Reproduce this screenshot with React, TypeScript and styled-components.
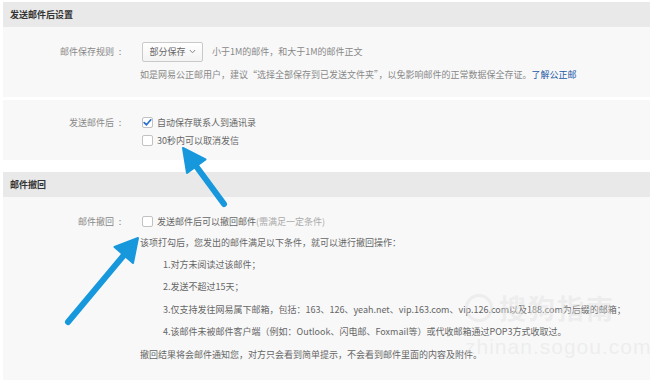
import React from "react";
import styled, { createGlobalStyle } from "styled-components";

const Global = createGlobalStyle`
  html, body { margin: 0; padding: 0; background: #ffffff; }
  body { font-family: "Noto Sans CJK SC", "Noto Sans", sans-serif; font-size: 9px; color: #666; }
`;

const Page = styled.div`
  position: relative;
  width: 650px;
  height: 385px;
  overflow: hidden;
  padding: 2px 0 0 3px;
  box-sizing: border-box;
`;

const SectionHeader = styled.div`
  height: 25px;
  background: #e9e9e9;
  display: flex;
  align-items: center;
  padding-left: 7px;
  font-weight: 700;
  font-size: 9px;
  color: #333;
`;

const Panel = styled.div<{ $h: number; $gapAfter?: number; $pt: number }>`
  background: #f8f8f8;
  height: ${(p) => p.$h}px;
  box-sizing: border-box;
  padding-top: ${(p) => p.$pt}px;
  margin-bottom: ${(p) => p.$gapAfter ?? 0}px;
  display: flex;
  flex-direction: column;
`;

const Row = styled.div<{ $h: number }>`
  display: grid;
  grid-template-columns: 123px 1fr;
  column-gap: 14px;
  align-items: center;
  height: ${(p) => p.$h}px;
`;

const Label = styled.div`
  display: flex;
  justify-content: flex-end;
  color: #888;
  white-space: nowrap;
`;

const Colon = styled.span`
  display: inline-block;
  width: 12px;
  text-align: center;
`;

const Content = styled.div<{ $indent?: number }>`
  display: flex;
  align-items: center;
  gap: 4px;
  white-space: nowrap;
  padding-left: ${(p) => p.$indent ?? 0}px;
`;

const Select = styled.div`
  margin-left: 2px;
  width: 61px;
  height: 20px;
  box-sizing: border-box;
  border: 1px solid #c9c9c9;
  border-radius: 2px;
  background: linear-gradient(#ffffff, #f3f3f3);
  display: flex;
  align-items: center;
  justify-content: center;
  gap: 3px;
  color: #666;
  margin-right: 5px;
`;

const Hint = styled.span<{ $c?: string }>`
  color: ${(p) => p.$c ?? "#888"};
`;

const Link = styled.a`
  color: #2558a6;
  text-decoration: none;
`;

const Box = styled.span`
  width: 11px;
  height: 11px;
  box-sizing: border-box;
  border: 1px solid #c2c2c2;
  border-radius: 2px;
  background: #fff;
  display: inline-flex;
  align-items: center;
  justify-content: center;
  margin-left: 2px;
`;

const Overlay = styled.svg`
  position: absolute;
  left: 0;
  top: 0;
  pointer-events: none;
`;

const Watermark = styled.div`
  position: absolute;
  left: 465px;
  top: 288px;
  display: flex;
  flex-direction: column;
  align-items: flex-start;
  color: rgba(225, 225, 225, 0.45);
  pointer-events: none;
`;

const WmTop = styled.div`
  display: flex;
  align-items: center;
  gap: 6px;
  font-size: 27px;
  font-weight: 700;
  letter-spacing: 2px;
`;

const WmCircle = styled.span`
  width: 28px;
  height: 28px;
  border: 3px solid rgba(225, 225, 225, 0.45);
  border-radius: 50%;
  box-sizing: border-box;
`;

const WmBottom = styled.div`
  font-family: "Liberation Sans", sans-serif;
  font-size: 21px;
  margin-top: 8px;
  letter-spacing: 1px;
`;

const Check = ({ checked }: { checked?: boolean }) => (
  <Box>
    {checked && (
      <svg width="9" height="9" viewBox="0 0 9 9">
        <path d="M1.2 4.6 L3.5 6.8 L7.8 1.8" fill="none" stroke="#2a6fd0" strokeWidth="1.7" strokeLinecap="round" strokeLinejoin="round" />
      </svg>
    )}
  </Box>
);

const Chevron = () => (
  <svg width="7" height="5" viewBox="0 0 7 5">
    <path d="M0.8 1 L3.5 3.8 L6.2 1" fill="none" stroke="#888" strokeWidth="1" />
  </svg>
);

export default function App() {
  return (
    <>
      <Global />
      <Page>
        <SectionHeader>发送邮件后设置</SectionHeader>
        <Panel $h={70} $pt={12} $gapAfter={3}>
          <Row $h={25}>
            <Label>邮件保存规则<Colon>:</Colon></Label>
            <Content>
              <Select>部分保存 <Chevron /></Select>
              <Hint>小于1M的邮件，和大于1M的邮件正文</Hint>
            </Content>
          </Row>
          <Row $h={20}>
            <span />
            <Content>
              <Hint>
                如是网易公正邮用户，建议“选择全部保存到已发送文件夹”，以免影响邮件的正常数据保全存证。
                <Link>了解公正邮</Link>
              </Hint>
            </Content>
          </Row>
        </Panel>
        <Panel $h={60} $pt={13} $gapAfter={12}>
          <Row $h={18}>
            <Label>发送邮件后<Colon>:</Colon></Label>
            <Content>
              <Check checked />
              <Hint $c="#666">自动保存联系人到通讯录</Hint>
            </Content>
          </Row>
          <Row $h={18}>
            <span />
            <Content>
              <Check />
              <Hint $c="#666">30秒内可以取消发信</Hint>
            </Content>
          </Row>
        </Panel>
        <SectionHeader>邮件撤回</SectionHeader>
        <Panel $h={183} $pt={14}>
          <Row $h={20}>
            <Label>邮件撤回<Colon>:</Colon></Label>
            <Content>
              <Check />
              <Hint $c="#666">
                发送邮件后可以撤回邮件<Hint $c="#aaa">(需满足一定条件)</Hint>
              </Hint>
            </Content>
          </Row>
          <Row $h={22.4}>
            <span />
            <Content>
              <Hint $c="#666">该项打勾后，您发出的邮件满足以下条件，就可以进行撤回操作：</Hint>
            </Content>
          </Row>
          <Row $h={22.4}>
            <span />
            <Content $indent={23}>
              <Hint $c="#666">1.对方未阅读过该邮件；</Hint>
            </Content>
          </Row>
          <Row $h={22.4}>
            <span />
            <Content $indent={23}>
              <Hint $c="#666">2.发送不超过15天；</Hint>
            </Content>
          </Row>
          <Row $h={22.4}>
            <span />
            <Content $indent={23}>
              <Hint $c="#666">3.仅支持发往网易属下邮箱，包括：163、126、yeah.net、vip.163.com、vip.126.com以及188.com为后缀的邮箱；</Hint>
            </Content>
          </Row>
          <Row $h={22.4}>
            <span />
            <Content $indent={23}>
              <Hint $c="#666">4.该邮件未被邮件客户端（例如：Outlook、闪电邮、Foxmail等）或代收邮箱通过POP3方式收取过。</Hint>
            </Content>
          </Row>
          <Row $h={22.4}>
            <span />
            <Content>
              <Hint $c="#666">撤回结果将会邮件通知您，对方只会看到简单提示，不会看到邮件里面的内容及附件。</Hint>
            </Content>
          </Row>
        </Panel>
        <Watermark>
          <WmTop><WmCircle />搜狗指南</WmTop>
          <WmBottom>zhinan.sogou.com</WmBottom>
        </Watermark>
        <Overlay width="650" height="385" viewBox="0 0 650 385">
          <g stroke="#1798dc" strokeWidth="6" strokeLinecap="round" fill="#1798dc">
            <line x1="224" y1="204" x2="196" y2="166" />
            <line x1="68" y1="322" x2="124" y2="255" />
          </g>
          <g fill="#1798dc" stroke="#1798dc" strokeWidth="2" strokeLinejoin="round">
            <polygon points="183,148 205.5,159.5 187,173" />
            <polygon points="138,238 133,263 114.5,247" />
          </g>
        </Overlay>
      </Page>
    </>
  );
}
